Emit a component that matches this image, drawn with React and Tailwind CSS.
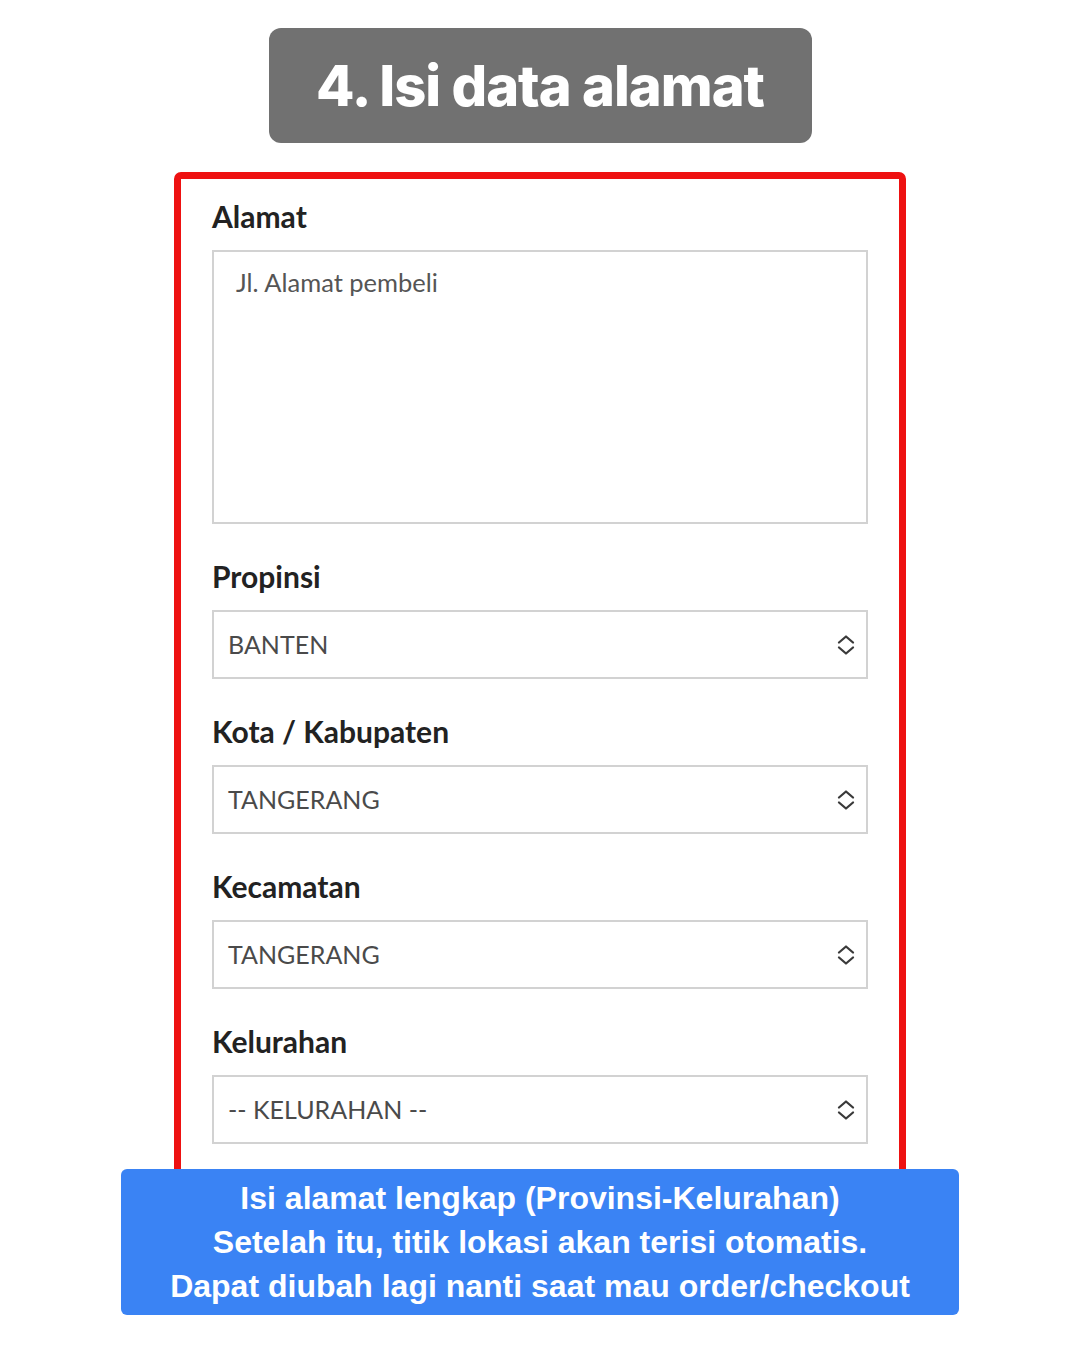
import React from "react";

function Chevron() {
  return (
    <svg width="18" height="22" viewBox="0 0 18 22" fill="none" stroke="#3a3a3a" strokeWidth="2.3" strokeLinecap="round" strokeLinejoin="round">
      <path d="M2 8.5 L9 2.5 L16 8.5" />
      <path d="M2 13.5 L9 19.5 L16 13.5" />
    </svg>
  );
}

function SelectField({ label, value, first }) {
  return (
    <div className={first ? "" : "mt-[35px]"}>
      <div className="text-[30px] leading-[34px] font-bold text-[#222] h-[34px]">{label}</div>
      <div className="mt-[17px] h-[69px] border-2 border-[#d2d2d2] bg-white flex items-center justify-between pl-[14px] pr-[11px]">
        <span className="text-[25px] text-[#4a4a4a]">{value}</span>
        <Chevron />
      </div>
    </div>
  );
}

export default function App() {
  return (
    <div className="w-[1080px] h-[1350px] bg-white flex flex-col items-center" style={{ fontFamily: "Lato, 'Noto Sans', sans-serif" }}>
      <div className="mt-[28px] w-[543px] h-[115px] rounded-[12px] bg-[#717171] flex items-center justify-center">
        <span className="text-white text-[56px] font-extrabold tracking-[-1px]" style={{ fontFamily: "Inter, 'Noto Sans', sans-serif" }}>4. Isi data alamat</span>
      </div>
      <div className="mt-[29px] w-[732px] h-[1010px] border-[7px] border-[#ee1111] rounded-[7px] pl-[31px] pr-[31px] pt-[20px]">
        <div className="text-[30px] leading-[34px] font-bold text-[#222] h-[34px]">Alamat</div>
        <div className="mt-[17px] h-[274px] border-2 border-[#d2d2d2] pl-[22px] pt-[11px]">
          <span className="text-[25.5px] text-[#555]">Jl. Alamat pembeli</span>
        </div>
        <div className="mt-[35px]">
          <SelectField first label="Propinsi" value="BANTEN" />
          <SelectField label="Kota / Kabupaten" value="TANGERANG" />
          <SelectField label="Kecamatan" value="TANGERANG" />
          <SelectField label="Kelurahan" value="-- KELURAHAN --" />
        </div>
      </div>
      <div className="relative mt-[-13px] w-[838px] h-[146px] rounded-[6px] bg-[#3a83f4] flex flex-col items-center justify-center text-white font-bold text-[32px] leading-[44px]" style={{ fontFamily: "'Liberation Sans', Arial, sans-serif" }}>
        <div>Isi alamat lengkap (Provinsi-Kelurahan)</div>
        <div>Setelah itu, titik lokasi akan terisi otomatis.</div>
        <div>Dapat diubah lagi nanti saat mau order/checkout</div>
      </div>
    </div>
  );
}
